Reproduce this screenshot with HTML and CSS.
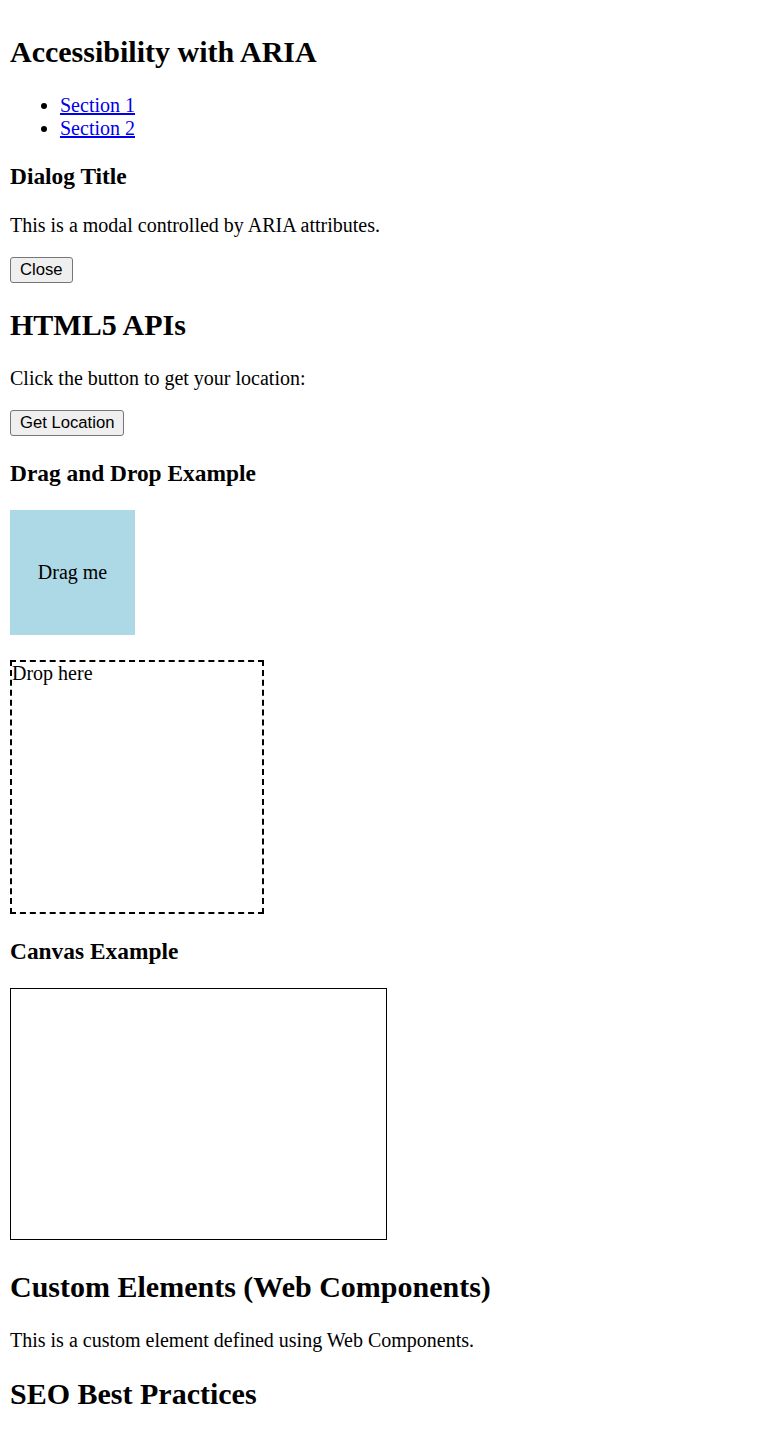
FILE: index.html
```html
<!DOCTYPE html>
<html lang="en">
<head>
<meta charset="utf-8">
<title>Web Features</title>
<link rel="stylesheet" href="styles.css">
</head>
<body class="page">
<section class="block">
  <h2 class="title">Accessibility with ARIA</h2>
  <nav aria-label="Sections">
    <ul class="links">
      <li><a class="link" href="#section1">Section 1</a></li>
      <li><a class="link" href="#section2">Section 2</a></li>
    </ul>
  </nav>
  <div class="dialog" role="dialog" aria-labelledby="dialog-title">
    <h3 class="subtitle" id="dialog-title">Dialog Title</h3>
    <p class="text">This is a modal controlled by ARIA attributes.</p>
    <button class="btn" type="button">Close</button>
  </div>
</section>
<section class="block">
  <h2 class="title">HTML5 APIs</h2>
  <p class="text">Click the button to get your location:</p>
  <button class="btn" type="button">Get Location</button>
  <h3 class="subtitle">Drag and Drop Example</h3>
  <div class="drag" draggable="true">Drag me</div>
  <div class="drop">Drop here</div>
  <h3 class="subtitle">Canvas Example</h3>
  <canvas class="canvas" width="300" height="200"></canvas>
</section>
<section class="block">
  <h2 class="title">Custom Elements (Web Components)</h2>
  <p class="text">This is a custom element defined using Web Components.</p>
</section>
<section class="block">
  <h2 class="title">SEO Best Practices</h2>
</section>
</body>
</html>
```
FILE: styles.css
```css
html { background: #fff; }
.page {
  margin: 0;
  padding: 10px;
  font-family: "Liberation Serif", "Times New Roman", serif;
  font-size: 20px;
  color: #000;
}
.title {
  font-size: 30px;
  font-weight: bold;
  margin: 24.9px 0;
}
.subtitle {
  font-size: 23.4px;
  font-weight: bold;
  margin: 23.4px 0;
}
.text {
  margin: 20px 0;
}
.links {
  margin: 20px 0;
  padding-left: 50px;
  list-style: disc;
}
.link {
  color: #0000ee;
  text-decoration: underline;
}
.btn {
  font-family: "Liberation Sans", Arial, sans-serif;
  font-size: 16.67px;
  line-height: normal;
  padding: 2.25px 9px;
  border: 1px solid #767676;
  border-radius: 3px;
  background: #efefef;
  color: #000;
  margin: 0;
}
.drag {
  width: 125px;
  height: 125px;
  background: lightblue;
  display: flex;
  align-items: center;
  justify-content: center;
}
.drop {
  width: 250px;
  height: 250px;
  border: 2.5px dashed #000;
  margin-top: 25px;
}
.canvas {
  width: 375px;
  height: 250px;
  border: 1px solid #000;
}
```
